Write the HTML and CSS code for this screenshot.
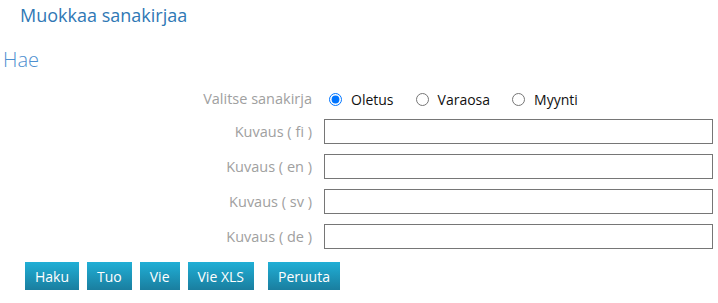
FILE: index.html
```html
<!DOCTYPE html>
<html lang="fi">
<head>
    <meta charset="UTF-8">
    <title>Muokkaa sanakirjaa</title>
    <link rel="stylesheet" href="styles.css">
</head>
<body>
    <h1 class="page-title">Muokkaa sanakirjaa</h1>
    <h2 class="section-title">Hae</h2>

    <form class="search-form" id="search-form">
        <div class="form-grid">
            <span class="field-label">Valitse sanakirja</span>
            <div class="radio-group">
                <label class="radio-item"><input type="radio" name="dictionary" value="oletus" checked> Oletus</label>
                <label class="radio-item"><input type="radio" name="dictionary" value="varaosa"> Varaosa</label>
                <label class="radio-item"><input type="radio" name="dictionary" value="myynti"> Myynti</label>
            </div>

            <label class="field-label" for="desc_fi">Kuvaus ( fi )</label>
            <input class="text-field" type="text" id="desc_fi" name="desc_fi">

            <label class="field-label" for="desc_en">Kuvaus ( en )</label>
            <input class="text-field" type="text" id="desc_en" name="desc_en">

            <label class="field-label" for="desc_sv">Kuvaus ( sv )</label>
            <input class="text-field" type="text" id="desc_sv" name="desc_sv">

            <label class="field-label" for="desc_de">Kuvaus ( de )</label>
            <input class="text-field" type="text" id="desc_de" name="desc_de">
        </div>

        <div class="button-row">
            <button class="btn" type="submit">Haku</button>
            <button class="btn" type="button">Tuo</button>
            <button class="btn" type="button">Vie</button>
            <button class="btn" type="button">Vie XLS</button>
            <button class="btn btn-cancel" type="reset">Peruuta</button>
        </div>
    </form>
</body>
</html>
```

FILE: styles.css
```css
body {
    margin: 0;
    font-family: "Open Sans", "Noto Sans", sans-serif;
    background-color: #fff;
}
.page-title {
    margin: 0;
    padding: 2px 0 0 20px;
    font-size: 18px;
    font-weight: normal;
    color: #2f78b5;
    line-height: 26px;
}
.section-title {
    margin: 0;
    padding: 18px 0 0 3px;
    font-size: 20px;
    font-weight: 300;
    color: #4d8fd0;
    line-height: 28px;
}
.search-form {
    padding-top: 15px;
}
.form-grid {
    display: grid;
    grid-template-columns: 312px 389px;
    column-gap: 12px;
    row-gap: 10px;
    align-items: center;
}
.field-label {
    text-align: right;
    font-size: 14.5px;
    line-height: 20px;
    color: #a0a0a0;
}
.radio-group {
    display: flex;
    align-items: center;
    gap: 17px;
    height: 20px;
}
.radio-item {
    display: flex;
    align-items: center;
    font-size: 14px;
    color: #111;
}
.radio-item input {
    margin: 0 9px 0 5px;
    width: 13px;
    height: 13px;
}
.text-field {
    height: 25px;
    margin: 0;
    padding: 0 4px;
    border: 1px solid #767676;
    box-sizing: border-box;
}
.button-row {
    display: flex;
    gap: 8px;
    padding: 13px 0 0 25px;
}
.btn {
    height: 28px;
    padding: 0 10px;
    border: none;
    font-family: inherit;
    font-size: 14px;
    color: #fff;
    background: linear-gradient(#20afd6, #1a7e9f);
    cursor: pointer;
}
.btn-cancel {
    margin-left: 6px;
}
```
